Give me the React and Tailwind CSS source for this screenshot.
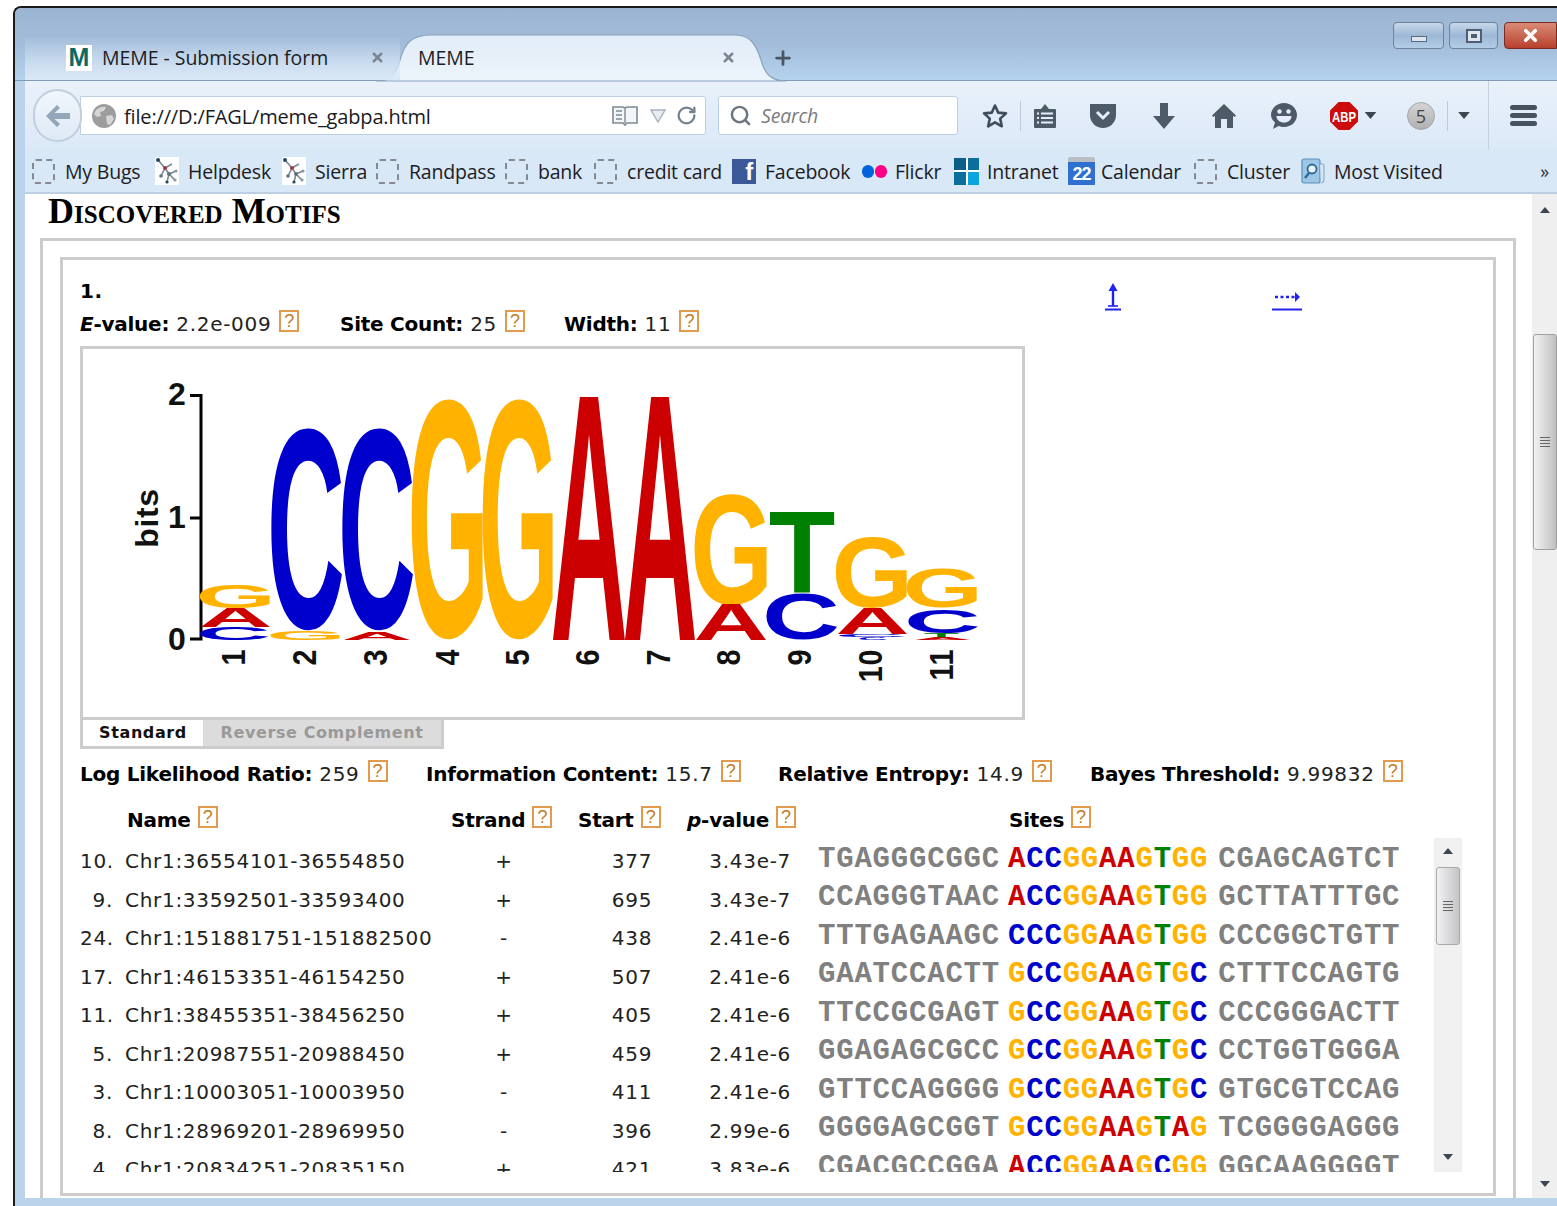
import { Plus, RotateCw, Search, X } from "lucide-react";

const SITE_COLORS = {
  A: "text-[#cc0000]",
  C: "text-[#0000cc]",
  G: "text-[#ffb300]",
  T: "text-[#008000]",
};

const SITES = [
  ["10.", "Chr1:36554101-36554850", "+", "377", "3.43e-7", "TGAGGGCGGC", "ACCGGAAGTGG", "CGAGCAGTCT"],
  ["9.", "Chr1:33592501-33593400", "+", "695", "3.43e-7", "CCAGGGTAAC", "ACCGGAAGTGG", "GCTTATTTGC"],
  ["24.", "Chr1:151881751-151882500", "-", "438", "2.41e-6", "TTTGAGAAGC", "CCCGGAAGTGG", "CCCGGCTGTT"],
  ["17.", "Chr1:46153351-46154250", "+", "507", "2.41e-6", "GAATCCACTT", "GCCGGAAGTGC", "CTTTCCAGTG"],
  ["11.", "Chr1:38455351-38456250", "+", "405", "2.41e-6", "TTCCGCGAGT", "GCCGGAAGTGC", "CCCGGGACTT"],
  ["5.", "Chr1:20987551-20988450", "+", "459", "2.41e-6", "GGAGAGCGCC", "GCCGGAAGTGC", "CCTGGTGGGA"],
  ["3.", "Chr1:10003051-10003950", "-", "411", "2.41e-6", "GTTCCAGGGG", "GCCGGAAGTGC", "GTGCGTCCAG"],
  ["8.", "Chr1:28969201-28969950", "-", "396", "2.99e-6", "GGGGAGCGGT", "GCCGGAAGTAG", "TCGGGGAGGG"],
  ["4.", "Chr1:20834251-20835150", "+", "421", "3.83e-6", "CGACGCCGGA", "ACCGGAAGCGG", "GGCAAGGGGT"],
];

// ink box of each bold capital, in em
const GLYPHS = {
  A: { l: 0.025, r: 0.697, t: 0.688, b: 0, fill: "#cc0000" },
  C: { l: 0.047, r: 0.677, t: 0.7, b: -0.012, fill: "#0000cc" },
  G: { l: 0.044, r: 0.72, t: 0.7, b: -0.012, fill: "#ffb300" },
  T: { l: 0.021, r: 0.59, t: 0.688, b: 0, fill: "#008000" },
};

// [letter, x1, x2, y1, y2]
const LOGO_LETTERS = [
  ["G", 200, 270, 585, 608],
  ["A", 201, 270, 608, 627],
  ["C", 201, 266, 627, 640],
  ["C", 272, 340, 428, 631],
  ["G", 271, 340, 631, 640],
  ["C", 343, 411, 428, 631],
  ["A", 344, 410, 632, 640],
  ["G", 412, 483, 399, 640],
  ["G", 483, 553, 399, 640],
  ["A", 553, 625, 397, 640],
  ["A", 625, 695, 397, 640],
  ["G", 695, 767, 494, 605],
  ["A", 696, 766, 605, 640],
  ["T", 771, 833, 512, 593],
  ["C", 767, 835, 594, 640],
  ["G", 836, 907, 537, 608],
  ["A", 838, 907, 608, 634],
  ["C", 840, 903, 634.5, 637],
  ["C", 860, 886, 637.5, 640],
  ["G", 907, 977, 568, 608],
  ["C", 909, 976, 609, 633],
  ["T", 925, 958, 633, 638],
  ["A", 915, 970, 638, 640],
];

const LOGO_TICKS = [233, 304, 375, 447, 517, 587, 658, 728, 799, 870, 941];

function LogoLetter({ ch, x1, x2, y1, y2 }) {
  const g = GLYPHS[ch];
  const sx = (x2 - x1) / (g.r - g.l);
  const sy = (y2 - y1) / (g.t - g.b);
  return (
    <text
      fontFamily="'Liberation Sans', sans-serif"
      fontWeight="700"
      fontSize="100"
      fill={g.fill}
      transform={`translate(${x1 - g.l * sx} ${y2 + g.b * sy}) scale(${sx / 100} ${sy / 100})`}
    >
      {ch}
    </text>
  );
}

function SequenceLogo() {
  return (
    <svg viewBox="83 349 939 366" className="block w-[939px] h-[366px]">
      <path d="M190 395.5H201V639H190M190 518H201" fill="none" stroke="#000" strokeWidth="3" />
      <g fontFamily="'Liberation Sans', sans-serif" fontWeight="700" fill="#111">
        <text x="168" y="405" fontSize="32">2</text>
        <text x="168" y="528" fontSize="32">1</text>
        <text x="168" y="650" fontSize="32">0</text>
        <text transform="translate(158 518) rotate(-90)" textAnchor="middle" fontSize="32">bits</text>
        {LOGO_TICKS.map((c, i) => (
          <text
            key={c}
            transform={`translate(${c + 12} 649) rotate(-90) scale(0.87 1)`}
            textAnchor="end"
            fontSize="33"
          >
            {i + 1}
          </text>
        ))}
      </g>
      {LOGO_LETTERS.map(([ch, x1, x2, y1, y2], i) => (
        <LogoLetter key={i} ch={ch} x1={x1} x2={x2} y1={y1} y2={y2} />
      ))}
    </svg>
  );
}

function HelpBox() {
  return (
    <span className="inline-flex items-center justify-center w-[20px] h-[22px] border-2 border-[#e39a4c] text-[#c47a22] text-[18px] leading-none font-normal tracking-normal -translate-y-[3px] [font-family:'Liberation_Sans',sans-serif]">
      ?
    </span>
  );
}

function Stat({ label, value, className = "" }) {
  return (
    <span className={`flex items-center gap-[8px] ${className}`}>
      <span>
        <b className="font-bold text-black tracking-[-0.25px]">{label}</b> {value}
      </span>
      <HelpBox />
    </span>
  );
}

function Triangle({ up, className = "" }) {
  return (
    <svg viewBox="0 0 10 6" className={`w-[10px] h-[6px] ${className}`}>
      <path d={up ? "M0 6L5 0L10 6Z" : "M0 0H10L5 6Z"} fill="#3d4650" />
    </svg>
  );
}

function Grip() {
  return (
    <span className="flex flex-col gap-[2px] w-[10px]">
      <span className="h-[1px] bg-[#666]" />
      <span className="h-[1px] bg-[#666]" />
      <span className="h-[1px] bg-[#666]" />
      <span className="h-[1px] bg-[#666]" />
    </span>
  );
}

function Dashed() {
  return <span className="block w-[23px] h-[25px] border-2 border-dashed border-[#85898f] rounded-[4px]" />;
}

function Molecule() {
  return (
    <svg viewBox="0 0 24 28" className="w-[24px] h-[28px] bg-white">
      <path d="M3 3L10 11L6 19M10 11L17 7M10 11L14 17L21 14M14 17L12 25M14 17L20 23" stroke="#7b8794" strokeWidth="1.6" fill="none" />
      <circle cx="3" cy="3" r="2" fill="#23485f" />
      <circle cx="10" cy="11" r="2" fill="#a33a4a" />
      <circle cx="6" cy="19" r="1.8" fill="#5f7285" />
      <circle cx="14" cy="17" r="2" fill="#5f7285" />
      <circle cx="21" cy="14" r="1.6" fill="#8a97a5" />
      <circle cx="12" cy="25" r="1.6" fill="#23485f" />
      <circle cx="20" cy="23" r="1.6" fill="#8a97a5" />
    </svg>
  );
}

function FacebookIcon() {
  return (
    <span className="flex items-end justify-end w-[24px] h-[25px] bg-[#3b5998] pr-[3px] text-white font-bold text-[24px] leading-[24px] overflow-hidden [font-family:'Liberation_Sans',sans-serif]">
      f
    </span>
  );
}

function FlickrIcon() {
  return (
    <span className="flex gap-[1px] w-[26px]">
      <span className="w-[12px] h-[13px] rounded-full bg-[#0063dc]" />
      <span className="w-[12px] h-[13px] rounded-full bg-[#ff0084]" />
    </span>
  );
}

function IntranetIcon() {
  return (
    <span className="grid grid-cols-2 gap-[2px] w-[25px] h-[27px] bg-white">
      <span className="bg-[#0b5f86]" />
      <span className="bg-[#0b6e9c]" />
      <span className="bg-[#0b6e9c]" />
      <span className="bg-[#0aa5e0]" />
    </span>
  );
}

function CalendarIcon() {
  return (
    <span className="flex flex-col w-[27px] h-[28px]">
      <span className="h-[5px] bg-[#b9bec5] rounded-t-[2px]" />
      <span className="flex-1 flex items-center justify-center bg-[#2f6fd0] text-white font-bold text-[18px] leading-none tracking-[-1px] [font-family:'Liberation_Sans',sans-serif]">
        22
      </span>
    </span>
  );
}

function MostVisitedIcon() {
  return (
    <svg viewBox="0 0 24 26" className="w-[24px] h-[26px]">
      <rect x="1" y="1" width="18" height="24" rx="2" fill="#9cc7e6" stroke="#5f8fb8" strokeWidth="1.2" />
      <path d="M19 6h3a1 1 0 0 1 1 1v15a3 3 0 0 1-3 3" fill="#d5e6f4" stroke="#7fa6c6" strokeWidth="1" />
      <circle cx="11" cy="11" r="4.5" fill="#e8f3fb" stroke="#2f6896" strokeWidth="1.8" />
      <path d="M8 15L4 20" stroke="#2f6896" strokeWidth="2.4" />
    </svg>
  );
}

const BOOKMARKS = [
  { icon: <Dashed />, label: "My Bugs", width: "w-[123px]" },
  { icon: <Molecule />, label: "Helpdesk", width: "w-[127px]" },
  { icon: <Molecule />, label: "Sierra", width: "w-[94px]" },
  { icon: <Dashed />, label: "Randpass", width: "w-[129px]" },
  { icon: <Dashed />, label: "bank", width: "w-[89px]" },
  { icon: <Dashed />, label: "credit card", width: "w-[138px]" },
  { icon: <FacebookIcon />, label: "Facebook", width: "w-[130px]" },
  { icon: <FlickrIcon />, label: "Flickr", width: "w-[92px]" },
  { icon: <IntranetIcon />, label: "Intranet", width: "w-[114px]" },
  { icon: <CalendarIcon />, label: "Calendar", width: "w-[126px]" },
  { icon: <Dashed />, label: "Cluster", width: "w-[107px]" },
  { icon: <MostVisitedIcon />, label: "Most Visited", width: "w-[145px]" },
];

function ToolbarIcons() {
  const dark = "#4d5b69";
  return (
    <>
      <svg viewBox="0 0 26 26" className="ml-[24px] w-[26px] h-[26px]">
        <path d="M13 2.5L16.2 9.6L24 10.4L18.2 15.6L19.8 23.3L13 19.4L6.2 23.3L7.8 15.6L2 10.4L9.8 9.6Z" fill="none" stroke="#3f4e5c" strokeWidth="2.6" strokeLinejoin="round" />
      </svg>
      <span className="ml-[12px] w-[1px] h-[30px] bg-[#bccbdb]" />
      <svg viewBox="0 0 24 26" className="ml-[12px] w-[24px] h-[26px]">
        <path d="M2 6h6l4-5 4 5h6a1 1 0 0 1 1 1v17a1 1 0 0 1-1 1H2a1 1 0 0 1-1-1V7a1 1 0 0 1 1-1z" fill={dark} />
        <path d="M8 10.5h12M8 15h12M8 19.5h12M4 10.5h2M4 15h2M4 19.5h2" stroke="#e6eff9" strokeWidth="2" />
      </svg>
      <svg viewBox="0 0 28 26" className="ml-[32px] w-[28px] h-[26px]">
        <path d="M1 1h26v11a13 13 0 0 1-26 0z" fill={dark} />
        <path d="M8 9l6 6 6-6" fill="none" stroke="#e6eff9" strokeWidth="3" />
      </svg>
      <svg viewBox="0 0 24 26" className="ml-[35px] w-[24px] h-[26px]">
        <path d="M8 0h8v13h7L12 26L1 13h7z" fill={dark} />
      </svg>
      <svg viewBox="0 0 26 26" className="ml-[35px] w-[26px] h-[26px]">
        <path d="M13 1L25 12.5L23.5 14L22 12.7V25H16V16H10V25H4V12.7L2.5 14L1 12.5Z" fill={dark} />
      </svg>
      <svg viewBox="0 0 28 28" className="ml-[33px] w-[28px] h-[28px]">
        <path d="M14 1C21 1 27 6.5 27 13C27 20 21 25 14 25C12 25 10 24.5 8.5 24L3 27L5 20.5C2.5 18 1 16 1 13C1 6.5 7 1 14 1Z" fill={dark} />
        <circle cx="9.5" cy="9.5" r="2.2" fill="#e6eff9" />
        <circle cx="18.5" cy="9.5" r="2.2" fill="#e6eff9" />
        <path d="M6.5 14h15c0 4-3.3 6.5-7.5 6.5S6.5 18 6.5 14z" fill="#e6eff9" />
      </svg>
      <svg viewBox="0 0 28 28" className="ml-[32px] w-[28px] h-[28px]">
        <path d="M8.5 0h11L28 8.5v11L19.5 28h-11L0 19.5v-11z" fill="#cc0c0c" />
        <text x="14" y="19.5" textAnchor="middle" fontFamily="'Liberation Sans', sans-serif" fontWeight="700" fontSize="15" fill="#fff" textLength="24" lengthAdjust="spacingAndGlyphs">
          ABP
        </text>
      </svg>
      <Triangle className="ml-[6px] w-[13px] h-[7px]" />
      <span className="ml-[30px] flex items-center justify-center w-[28px] h-[28px] rounded-full bg-gradient-to-b from-[#d4d4d4] to-[#b1b1b1] border border-[#a5a5a5] text-[#444] text-[18px] leading-none [font-family:'Open_Sans',sans-serif]">
        5
      </span>
      <span className="ml-[12px] w-[1px] h-[30px] bg-[#bccbdb]" />
      <Triangle className="ml-[10px] w-[12px] h-[7px]" />
      <span className="ml-[18px] w-[1px] h-[69px] bg-[#c3d1e0]" />
      <span className="ml-[21px] flex flex-col gap-[3px] w-[27px]">
        <span className="h-[5px] rounded-full bg-[#46535f]" />
        <span className="h-[5px] rounded-full bg-[#46535f]" />
        <span className="h-[5px] rounded-full bg-[#46535f]" />
      </span>
    </>
  );
}

function TitleBar() {
  return (
    <div className="relative flex items-start h-[73px] shrink-0 pl-[10px] bg-gradient-to-b from-[#9ab4d1] via-[#a2bcd9] to-[#b5d3ee] border-b border-[#7f9bb8]">
      {/* active tab shape */}
      <svg viewBox="370 30 430 52" className="absolute left-[355px] top-[22px] w-[430px] h-[52px]">
        <defs>
          <linearGradient id="activeTab" x1="0" y1="0" x2="0" y2="1">
            <stop offset="0" stopColor="#e2edf8" />
            <stop offset="1" stopColor="#ecf3fb" />
          </linearGradient>
        </defs>
        <path
          d="M376 81C392 81 396 74 400 60C405 42 412 35 432 35L735 35C750 35 756 44 761 60C765 74 771 81 786 81Z"
          fill="url(#activeTab)"
          stroke="#88a4c1"
          strokeWidth="1.2"
        />
      </svg>

      <div className="relative flex items-center h-[45px] mt-[27px] text-[19.5px] tracking-[-0.05px] text-[#1c1c24] [font-family:'Open_Sans',sans-serif]">
        <div className="flex items-center w-[375px] h-full pl-[41px] bg-gradient-to-b from-transparent to-[#dbe8f6]">
          <span className="flex items-center justify-center w-[26px] h-[26px] bg-white text-[#0b6b62] font-bold text-[25px] leading-none [font-family:'Liberation_Sans',sans-serif]">
            M
          </span>
          <span className="ml-[10px] w-[268px] whitespace-nowrap">MEME - Submission form</span>
          <X size={15} strokeWidth={4} className="text-[#7a8591]" />
        </div>
        <span className="ml-[18px] w-[303px]">MEME</span>
        <X size={15} strokeWidth={4} className="text-[#7a8591]" />
        <Plus size={22} strokeWidth={3} className="ml-[36px] text-[#4a5763]" />
      </div>

      <div className="flex ml-auto mt-[14px] h-[27px]">
        <button className="flex items-center justify-center w-[51px] rounded-[4px] border border-[#6f8199] bg-gradient-to-b from-[#c7d8ea] via-[#9db8d5] to-[#b3cde6]">
          <span className="block w-[16px] h-[6px] mt-[6px] bg-[#dfe5ec] border border-[#566a80]" />
        </button>
        <button className="flex items-center justify-center w-[49px] ml-[5px] rounded-[4px] border border-[#6f8199] bg-gradient-to-b from-[#c7d8ea] via-[#9db8d5] to-[#b3cde6]">
          <span className="flex items-center justify-center w-[16px] h-[14px] border-2 border-[#4d5e72] bg-[#dfe5ec]">
            <span className="block w-[6px] h-[4px] bg-[#4d5e72]" />
          </span>
        </button>
        <button className="flex items-center justify-center w-[53px] ml-[6px] rounded-l-[4px] border border-[#7c2a22] bg-gradient-to-b from-[#d98a76] to-[#b7402c]">
          <X size={19} strokeWidth={4.5} className="text-white" />
        </button>
      </div>
    </div>
  );
}

function NavBar() {
  return (
    <div className="flex items-center h-[69px] shrink-0 pl-[8px] bg-gradient-to-b from-[#e9f1fa] to-[#dbe9f7] text-[#222]">
      <div className="relative z-10 flex items-center justify-center w-[49px] h-[53px] rounded-full border-2 border-[#c0cedd] bg-gradient-to-b from-[#f0f6fc] to-[#dfeaf6]">
        <svg viewBox="0 0 26 24" className="w-[26px] h-[24px]">
          <path d="M12 1L1 12L12 23L15 20L9.5 15H25V9H9.5L15 4Z" fill="#93a7b9" />
        </svg>
      </div>
      <div className="flex items-center w-[626px] h-[39px] -ml-[2px] pl-[11px] bg-white border border-[#bccfe3] rounded-r-[3px]">
        <svg viewBox="0 0 24 24" className="w-[24px] h-[24px]">
          <circle cx="12" cy="12" r="12" fill="#9d9d9d" />
          <path d="M4 6C7 3 12 2 14 3L12 7L8 8L9 12L5 13L2 10ZM14 12L20 11L22 15L18 21L15 20Z" fill="#d6d6d6" />
        </svg>
        <span className="ml-[8px] w-[488px] pt-[2px] text-[20px] tracking-[-0.16px] text-[#1a1a1f] [font-family:'Open_Sans',sans-serif]">
          file:///D:/FAGL/meme_gabpa.html
        </span>
        <svg viewBox="0 0 26 22" className="w-[26px] h-[22px]">
          <path d="M1 2h10l2 1 2-1h10v16H15l-2 2-2-2H1z" fill="#f3f6f9" stroke="#7f8a94" strokeWidth="1.6" />
          <path d="M13 4v14M4 6h6M4 10h6M4 14h6" stroke="#7f8a94" strokeWidth="1.4" />
        </svg>
        <svg viewBox="0 0 16 14" className="ml-[12px] w-[16px] h-[14px]">
          <path d="M1 1H15L8 13Z" fill="#e8edf3" stroke="#a6b1bc" strokeWidth="1.4" />
        </svg>
        <RotateCw size={21} strokeWidth={2.6} className="ml-[10px] text-[#75828f]" />
      </div>
      <div className="flex items-center w-[240px] h-[39px] ml-[12px] pl-[10px] bg-white border border-[#bccfe3] rounded-[3px]">
        <Search size={23} strokeWidth={2.6} className="text-[#6b7680]" />
        <span className="ml-[9px] text-[19.5px] italic tracking-[-0.2px] text-[#7c7c7c] [font-family:'Open_Sans',sans-serif]">
          Search
        </span>
      </div>
      <ToolbarIcons />
    </div>
  );
}

function BookmarksBar() {
  return (
    <div className="flex items-center h-[44px] shrink-0 pl-[7px] bg-[#d9e8f7] border-b-2 border-[#bdd0e3] text-[19.5px] tracking-[-0.2px] text-[#1c1c24] [font-family:'Open_Sans',sans-serif]">
      {BOOKMARKS.map((b) => (
        <div key={b.label} className={`flex items-center shrink-0 ${b.width}`}>
          <span className="flex items-center w-[33px] shrink-0">{b.icon}</span>
          <span className="pt-[1px] whitespace-nowrap">{b.label}</span>
        </div>
      ))}
      <span className="ml-auto mr-[8px] text-[18px] text-[#333]">»</span>
    </div>
  );
}

function SiteRow({ row }) {
  const [num, name, strand, start, pval, left, site, right] = row;
  return (
    <div className="flex items-center h-[38.5px] text-[20px] tracking-[0.7px] text-[#222] whitespace-nowrap">
      <span className="w-[33px] text-right">{num}</span>
      <span className="ml-[12px] w-[325px]">{name}</span>
      <span className="w-[108px] text-center">{strand}</span>
      <span className="w-[148px] text-center">{start}</span>
      <span className="w-[85px] text-right">{pval}</span>
      <span className="flex ml-[27px] -mt-[4px] font-bold text-[29px] leading-none tracking-[0.8px] text-[#808080] [font-family:'Liberation_Mono',monospace]">
        <span>{left}</span>
        <span className="ml-[8px]">
          {site.split("").map((ch, i) => (
            <span key={i} className={SITE_COLORS[ch]}>
              {ch}
            </span>
          ))}
        </span>
        <span className="ml-[10px]">{right}</span>
      </span>
    </div>
  );
}

function HeaderCell({ className = "", children }) {
  return (
    <span className={`flex items-center gap-[7px] ${className}`}>
      <span>{children}</span>
      <HelpBox />
    </span>
  );
}

function MotifCard() {
  return (
    <div className="h-[939px] border-[3px] border-[#cccccc] pl-[17px] text-[20px] tracking-[0.7px] text-[#222] [font-family:'DejaVu_Sans',sans-serif]">
      <div className="flex items-center h-[32px] mt-[15px]">
        <b className="w-[1025px] font-bold text-black">1.</b>
        <a href="#top" className="w-[167px] mt-[12px]">
          <svg viewBox="0 0 16 28" className="w-[16px] h-[28px]">
            <path d="M8 0L3.5 8H6.8V23H9.2V8H12.5Z" fill="#2222ee" />
            <path d="M3 23H13" stroke="#2222ee" strokeWidth="1.6" />
            <path d="M0 26.5H16" stroke="#2222ee" strokeWidth="2" />
          </svg>
        </a>
        <a href="#next" className="mt-[12px]">
          <svg viewBox="0 0 30 28" className="w-[30px] h-[28px]">
            <path d="M3 14H24" stroke="#2222ee" strokeWidth="2.4" strokeDasharray="3 2.5" />
            <path d="M23 9L28 14L23 19Z" fill="#2222ee" />
            <path d="M0 26.5H30" stroke="#2222ee" strokeWidth="2" />
          </svg>
        </a>
      </div>

      <div className="flex items-center h-[34px]">
        <Stat className="w-[260px]" label={<><i>E</i>-value:</>} value="2.2e-009" />
        <Stat className="w-[224px]" label="Site Count:" value="25" />
        <Stat label="Width:" value="11" />
      </div>

      <div className="w-[945px] h-[374px] mt-[5px] border-[3px] border-[#cccccc]">
        <SequenceLogo />
      </div>
      <div className="flex h-[29px] text-[16px] font-bold tracking-[0.6px]">
        <div className="flex items-center justify-center w-[123px] border-l-[3px] border-b-[3px] border-[#cccccc] text-[#111]">
          Standard
        </div>
        <div className="flex items-center justify-center w-[241px] bg-[#dcdcdc] border-r-[3px] border-b-[3px] border-[#cccccc] text-[#999999]">
          Reverse Complement
        </div>
      </div>

      <div className="flex items-center h-[34px] mt-[8px]">
        <Stat className="w-[346px]" label="Log Likelihood Ratio:" value="259" />
        <Stat className="w-[352px]" label="Information Content:" value="15.7" />
        <Stat className="w-[312px]" label="Relative Entropy:" value="14.9" />
        <Stat label="Bayes Threshold:" value="9.99832" />
      </div>

      <div className="flex items-center h-[34px] mt-[12px] font-bold text-black tracking-[-0.25px]">
        <HeaderCell className="w-[371px] pl-[47px]">Name</HeaderCell>
        <HeaderCell className="w-[127px]">Strand</HeaderCell>
        <HeaderCell className="w-[109px]">Start</HeaderCell>
        <HeaderCell className="w-[322px]">
          <i>p</i>-value
        </HeaderCell>
        <HeaderCell>Sites</HeaderCell>
      </div>

      <div className="flex h-[334px] mt-[1px]">
        <div className="w-[1354px] pt-[4px] overflow-hidden">
          {SITES.map((row) => (
            <SiteRow key={row[1]} row={row} />
          ))}
        </div>
        <div className="flex flex-col items-center w-[28px] bg-[#f0f0f0]">
          <Triangle up className="mt-[10px]" />
          <div className="flex items-center justify-center w-[24px] h-[78px] mt-[13px] rounded-[3px] border border-[#a9a9a9] bg-gradient-to-r from-[#f2f2f2] to-[#c4c4c8]">
            <Grip />
          </div>
          <Triangle className="mt-auto mb-[12px]" />
        </div>
      </div>
    </div>
  );
}

function PageScrollbar() {
  return (
    <div className="flex flex-col items-center w-[25px] shrink-0 bg-[#efefef]">
      <Triangle up className="mt-[13px]" />
      <div className="flex items-center justify-center w-[24px] h-[216px] mt-[121px] rounded-[3px] border border-[#9f9f9f] bg-gradient-to-r from-[#f2f2f2] to-[#c0c0c4]">
        <Grip />
      </div>
      <Triangle className="mt-auto mb-[11px]" />
    </div>
  );
}

export default function App() {
  return (
    <div className="w-[1557px] h-[1206px] overflow-hidden bg-white pt-[6px] pl-[13px]">
      <div className="flex flex-col w-[1544px] h-[1200px] border-l-2 border-t-2 border-[#1a1a1a] rounded-tl-[8px] overflow-hidden bg-[#bcd3ec]">
        <TitleBar />
        <div className="flex flex-col flex-1 min-h-0 pl-[10px] pb-[8px] bg-[#bcd3ec]">
          <NavBar />
          <BookmarksBar />
          <div className="flex flex-1 min-h-0 bg-white">
            <main className="flex-1 min-w-0 overflow-hidden">
              <h2 className="h-[34px] pl-[23px] font-bold text-[36px] leading-[34px] text-black [font-variant:small-caps] [font-family:'Liberation_Serif',serif]">
                Discovered Motifs
              </h2>
              <div className="w-[1476px] ml-[15px] mt-[10px] border-[3px] border-[#cccccc] pl-[17px] pt-[16px] h-[1000px]">
                <div className="w-[1436px]">
                  <MotifCard />
                </div>
              </div>
            </main>
            <PageScrollbar />
          </div>
        </div>
      </div>
    </div>
  );
}
